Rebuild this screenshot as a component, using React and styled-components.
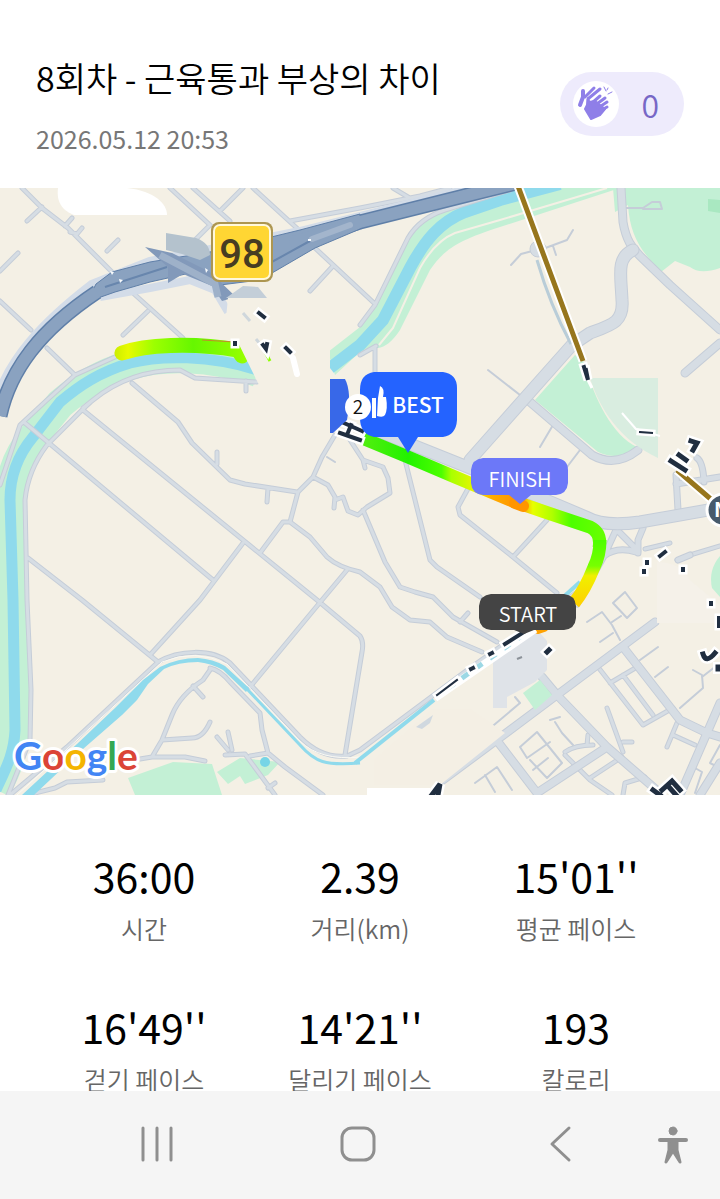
import styled, { createGlobalStyle } from "styled-components";

const GlobalStyle = createGlobalStyle`
  * {
    box-sizing: border-box;
  }

  body {
    margin: 0;
    background-color: #fff;
    font-family: "Noto Sans CJK KR", "Noto Sans", sans-serif;
    font-weight: 350;
  }
`;

const Screen = styled.div`
  display: flex;
  flex-direction: column;
  height: 100vh;
`;

const Content = styled.main`
  flex: 1;
  min-height: 0;
  overflow-y: auto;
  scrollbar-width: none;
`;

const Header = styled.header`
  display: flex;
  justify-content: space-between;
  align-items: center;
  padding: 52px 36px 32px;
`;

const Title = styled.h1`
  margin: 0 0 16px;
  font-size: 34px;
  font-weight: 350;
  line-height: 52px;
  color: #000;
`;

const DateText = styled.time`
  display: block;
  font-size: 25px;
  font-weight: 400;
  line-height: 36px;
  color: #777;
`;

const ClapButton = styled.button`
  display: flex;
  align-items: center;
  gap: 22px;
  height: 64px;
  padding: 0 25px 0 13px;
  border: none;
  border-radius: 32px;
  background-color: #eeebfc;
  color: #7767c6;
  font-family: inherit;
  font-size: 32px;
  font-weight: 350;
`;

const ClapCircle = styled.span`
  display: flex;
  width: 46px;
  height: 46px;
  border-radius: 50%;
  background-color: #fff;
`;

const MapSvg = styled.svg`
  display: block;
  width: 100%;
  height: auto;
  background-color: #f4f0e5;

  text {
    font-family: "Noto Sans CJK KR", "Noto Sans", sans-serif;
  }

  .shield {
    font-family: Roboto, sans-serif;
  }

  .logo {
    font-family: Lato, sans-serif;
  }
`;

const Stats = styled.dl`
  display: grid;
  grid-template-columns: repeat(3, 1fr);
  row-gap: 45px;
  margin: 0;
  padding: 49px 36px;
`;

const Stat = styled.div`
  display: flex;
  flex-direction: column-reverse;
  align-items: center;
`;

const StatLabel = styled.dt`
  font-size: 25px;
  line-height: 44px;
  color: #666;
`;

const StatValue = styled.dd`
  margin: 0;
  font-size: 41px;
  font-weight: 400;
  line-height: 62px;
  color: #000;
`;

const NavBar = styled.nav`
  display: grid;
  grid-template-columns: 1fr auto 1fr;
  align-items: start;
  flex: none;
  height: 108px;
  padding: 29px 4px 0 0;
  background-color: #f5f5f5;
`;

const NavSide = styled.div`
  display: flex;
  justify-content: ${(props) => (props.$end ? "flex-end" : "center")};
  gap: 65px;
  padding-right: ${(props) => (props.$end ? "19px" : "24px")};
`;

const NavButton = styled.button`
  display: flex;
  padding: 0;
  border: none;
  background: none;
`;

const stats = [
  { label: "시간", value: "36:00" },
  { label: "거리(km)", value: "2.39" },
  { label: "평균 페이스", value: "15'01''" },
  { label: "걷기 페이스", value: "16'49''" },
  { label: "달리기 페이스", value: "14'21''" },
  { label: "칼로리", value: "193" },
];

const ROAD = "#d6dde4";
const ROAD_EDGE = "#c5cdd8";
const GREEN = "#c3f0d5";
const WATER = "#8fdaec";
const INK = "#202e40";

const roads = [
  {
    width: 0,
    d: `M488 370L520 395 M553 425L540 447 M580 450L567 467 M327 457L335 462
      M511 265L521 254L536 250 M540 250L567 240L573 230 M553 246L556 255
      M626 208H643L652 202H660L662 209H643
      M613 603L625 592L637 608L627 618Z M587 622L602 612L612 625L620 640 M600 642L613 633 M612 622L621 616
      M480 718L488 730L520 703L515 697 M438 752L457 732L463 742L442 760
      M520 747L537 732L562 763L547 778L530 760M520 747L527 758L550 742
      M475 783L497 767L512 790M485 775L495 792 M550 720L560 717 M555 722L562 733L573 745
      M640 660L658 647 M655 677L668 667 M680 708L703 688L702 675L693 670 M702 677L720 663
      M533 770L548 758 M695 768L702 772L695 793 M720 745L710 763L720 768`,
  },
  {
    width: 3,
    d: `M22 188L42 208L68 228L112 272 M27 221L42 207 M65 226L72 218 M70 232L77 234L82 228
      M107 251L118 240 M0 271L18 253 M0 301L31 330 M170 188L210 225L195 240
      M193 188L230 221 M220 211L243 188 M253 188L300 231 M290 221L360 208L420 196L450 188
      M393 188L408 197 M315 248L374 303 M333 266L310 291 M133 293L183 338 M148 311L123 335
      M47 348L75 375 M132 383L152 400L178 422L192 443L230 480L245 484L297 492
      M246 381V391 M217 452V464 M268 488L267 502
      M83 410L317 600L360 636Q364 642 362 652L345 755 M25 423L213 580
      M28 558L82 600L158 662 M150 655L200 600L243 543 M347 570L322 600L250 687
      M260 553L283 522L290 522L310 537L327 557Q338 567 360 572L380 587L392 607L410 620L430 622L447 637L482 652
      M363 510L385 562L400 587L415 592L433 597L453 617L497 642 M460 622L468 613
      M290 522L298 492L313 477L322 457L335 435
      M313 477L328 485L335 497L334 508 M335 500L343 497L348 511L358 515L367 507L390 493L388 478L383 467L363 460L350 440
      M363 460L365 468 M405 460L430 560L437 567L480 597
      M470 485L458 507L460 515L513 557L557 593 M547 520L513 557
      M210 670L203 680Q180 695 172 715L162 740L152 757L140 759 M152 757L185 757L205 761
      M193 686L203 697 M162 740L192 738Q203 738 210 722
      M210 668Q220 670 230 682L260 713L262 730L268 753L285 767L323 795
      M225 755L245 754L275 795 M250 756L268 753 M217 737L228 750 M228 732L232 750 M275 783L268 788
      M35 793L55 788L67 782L103 780 M375 348V374 M360 355L376 346
      M598 667L643 725L673 708 M623 675L653 715 M610 683L637 667
      M607 708L623 752 M623 742L632 742 M677 723L667 747 M673 735L695 745
      M565 752Q575 745 593 745 M565 755L590 780L612 795 M590 778L622 757 M623 795L625 783L645 777 M588 735L587 745
      M645 549L670 543 M677 560L690 555L720 546
      M0 485L20 425L47 400L75 375L115 357
      M93 400L82 410L47 445Q28 470 25 500L27 600L31 690L30 740L8 795
      M83 408L93 400C120 378 150 370 180 370L195 378L257 382
      M360 325L375 305L408 238Q420 218 445 210L510 190
      M10 795L67 747L158 662C178 650 212 648 230 663L300 737Q322 759 347 756L360 750L470 668L545 615L580 590`,
  },
  {
    width: 5,
    d: `M676 475L678 510 M676 484L720 477 M697 458Q703 462 704 482
      M616 530L604 556L577 604 M617 530L638 551 M643 528L638 540V553 M604 556Q617 546 636 552
      M678 560L690 555`,
  },
  {
    width: 7,
    d: `M621 188L623 222C626 240 632 248 640 256L670 285L720 330 M685 373L720 343
      M655 622L557 695L443 780 M542 677L557 695L607 747L660 793
      M623 647L680 720L707 733L720 737 M720 703L680 795 M498 742L537 793L607 747 M720 763L700 795
      M530 402L592 455Q615 468 638 450`,
  },
  {
    width: 11,
    d: `M633 250C616 258 621 275 622 300C624 322 612 325 590 333L572 345L470 460
      M370 428L470 468L586 517C600 525 620 525 640 522L720 508`,
  },
];

// fragments of half-hidden place labels
const labelMarks = [
  { width: 5, d: "M259 313L264 317 M263 345L266 349L267 344 M286 348L290 352 M235 343V344 M584 367L588 380L586 370" },
  { width: 5, d: "M344 423L362 431 M340 433L360 440 M351 425L347 435" },
  { width: 3, d: "M640 432L652 433" },
  { width: 6, d: "M671 461L685 470 M679 455L686 460 M691 441L697 443L693 450" },
  { width: 5, d: "M660 556L665 552 M647 562V563 M644 571V572 M683 569V570 M711 603V604 M719 618V626" },
  { width: 6, d: "M703 654Q706 664 715 653 M718 667V669 M547 652L549 650" },
  { width: 3, d: "M437 695L457 680" },
  { width: 5, d: "M471 669L473 668 M490 654L492 653 M505 644L524 632" },
  { width: 6, d: "M431 796L440 784L438 795 M653 790L660 795 M662 790L672 781L680 790 M668 786L676 795" },
];

function MapRoads() {
  return roads.map((road) => (
    <g key={road.width} fill="none" strokeLinecap="round" strokeLinejoin="round">
      <path d={road.d} stroke={ROAD_EDGE} strokeWidth={road.width + 2} />
      {road.width > 0 && <path d={road.d} stroke={ROAD} strokeWidth={road.width} />}
    </g>
  ));
}

function RunMap() {
  return (
    <MapSvg viewBox="0 188 720 607" role="img" aria-label="러닝 경로 지도">
      <defs>
        <linearGradient id="routeWest" gradientUnits="userSpaceOnUse" x1="115" y1="0" x2="245" y2="0">
          <stop offset="0" stopColor="#ccee00" />
          <stop offset="0.1" stopColor="#e8fa00" />
          <stop offset="0.3" stopColor="#9cff00" />
          <stop offset="0.6" stopColor="#66f700" />
          <stop offset="1" stopColor="#96ff00" />
        </linearGradient>
        <linearGradient id="routeEast" gradientUnits="userSpaceOnUse" x1="360" y1="0" x2="600" y2="0">
          <stop offset="0" stopColor="#55ee10" />
          <stop offset="0.2" stopColor="#22f200" />
          <stop offset="0.34" stopColor="#4dff00" />
          <stop offset="0.38" stopColor="#aaff00" />
          <stop offset="0.48" stopColor="#e8f500" />
          <stop offset="0.55" stopColor="#ffac00" />
          <stop offset="0.67" stopColor="#ff9100" />
          <stop offset="0.72" stopColor="#e8ff00" />
          <stop offset="0.8" stopColor="#b0ff00" />
          <stop offset="0.88" stopColor="#4dff00" />
          <stop offset="1" stopColor="#66ff00" />
        </linearGradient>
        <linearGradient id="routeSouth" gradientUnits="userSpaceOnUse" x1="0" y1="540" x2="0" y2="605">
          <stop offset="0" stopColor="#4dff00" />
          <stop offset="0.4" stopColor="#77ff00" />
          <stop offset="0.55" stopColor="#f0f000" />
          <stop offset="1" stopColor="#ffd000" />
        </linearGradient>
      </defs>

      <g fill={GREEN}>
        <path d="M328 352L360 327L375 305L408 238Q420 218 445 210L510 188H620L500 227C460 240 445 248 430 270L400 330C392 342 385 347 378 348L360 352L335 375Z" />
        <path d="M613 188H720V268Q700 275 690 267L675 261L661 272C640 250 630 235 628 205L615 212Z" />
        <path d="M535 400L575 355L584 362C595 400 612 435 637 447Q620 462 598 452Z" />
        <path d="M128 778L173 762L212 764L222 795H135Z M217 772L240 758L280 762L268 775L245 784L240 776L228 784Z" />
        <path d="M720 556Q708 570 712 588L720 597Z" />
      </g>
      <path d="M708 199L720 200V213L708 211Z" fill="#a9e8c1" />
      <path d="M258 372C210 355 160 355 130 365C100 374 80 387 60 404L33 437C18 455 10 475 10 500L13 600L15 730C14 755 5 770 -4 790" fill="none" stroke={GREEN} strokeWidth="30" />
      <path d="M258 370C210 355 160 355 130 363C100 372 80 385 60 402L33 437C18 455 10 475 10 500L13 600L15 730C14 755 5 770 -4 790" fill="none" stroke={WATER} strokeWidth="11" />
      <path d="M330 368L360 345L383 320L410 268C425 240 440 222 465 212L500 200L560 184" fill="none" stroke={WATER} strokeWidth="12" />
      <path d="M379 345L393 328L420 268C433 245 445 237 455 233L500 220L607 188" fill="none" stroke="#f4f0e5" strokeWidth="2" />

      <MapRoads />
      <path d="M17 795L162 662Q195 648 227 664L300 741Q320 761 360 757" fill="none" stroke="#faf9f3" />
      <path d="M22 795L77 744L115 708L143 680L160 667Q178 658 198 658Q213 659 225 666L249 688L246 692L223 670Q210 663 198 662Q178 662 164 669L148 684L137 700L122 715L83 749L34 795Z" fill={WATER} />
      <g fill="none" stroke={WATER}>
        <path d="M247 689L300 745C315 762 325 766 360 763" strokeWidth="3" />
        <path d="M355 763L434 700" strokeWidth="4" />
        <path d="M560 600L580 582" strokeWidth="4" />
      </g>
      <circle cx="265" cy="762" r="5" fill="#76d5e6" />

      {/* expressway */}
      <g fill="none" strokeLinejoin="round">
        <path d="M-3 400C10 360 40 325 92 285L150 262L300 232L515 178" stroke="#d3dce8" strokeWidth="10" />
        <path d="M100 297L150 288L190 280L215 290L228 312" stroke="#d3dce8" strokeWidth="8" />
        <path d="M0 416C10 370 40 330 97 292" stroke="#5f7fa8" strokeWidth="15" />
        <path d="M290 243L360 222L460 197L520 182" stroke="#5f7fa8" strokeWidth="15" />
      </g>
      <path d="M86 304L96 284L112 272L150 262L210 252L300 230L360 214V229L315 248L260 280L220 285L190 273L150 282L115 292L98 298Z" fill="#8aa2c0" stroke="#5f7fa8" />
      <g fill="none" stroke="#8aa2c0">
        <path d="M0 416C10 370 40 330 97 292" strokeWidth="12" />
        <path d="M290 243L360 222L460 197L520 182" strokeWidth="12" />
      </g>
      <path d="M105 287L167 267 M270 263L308 242L350 225" fill="none" stroke="#6886ad" strokeWidth="2" />
      <path d="M312 239L350 225" stroke="#a3b5cc" strokeWidth="6" strokeLinecap="round" />
      <path d="M145 247L172 253L210 272L236 297L222 301L212 286L183 274L168 283V267Z" fill="#8299ba" />
      <path d="M160 255L215 284L218 297" fill="none" stroke="#9eb1c9" strokeWidth="7" />
      <path d="M166 233L196 238Q210 243 210 255L200 260L182 254L166 250Z" fill="#b4c2cd" />
      <path d="M226 298L243 286L258 287L267 298Z" fill="#c3ced8" />
      <path d="M110 271L114 272L112 275Z M119 279L123 280L120 283Z M205 268L208 270L206 273Z M308 239H311V241H308Z" fill="#f7fafc" />

      <path d="M58 188C56 204 64 211 74 215H167C167 204 155 191 127 188Z" fill="#fff" />

      {/* railway */}
      <g fill="none">
        <path d="M537 260Q550 305 571 344" stroke="#b9cdd8" strokeWidth="3" />
        <circle cx="538" cy="249" r="8" fill={ROAD} stroke={ROAD_EDGE} />
        <path d="M518 186L583 361 M677 470L713 501" stroke="#fff" strokeWidth="9" />
        <path d="M518 186L583 361 M677 470L713 501" stroke="#97761d" strokeWidth="5" />
      </g>
      <path d="M590 378H658V458C620 440 600 410 590 378Z" fill="#d9ede0" />
      <path d="M584 372L592 388" fill="none" stroke="#fff" strokeWidth="3" />
      <path d="M622 413L636 429L660 436" fill="none" stroke="#fff" strokeWidth="2" />

      <path d="M493 657L523 633H540L547 641V670L535 682L507 697V708H493Z" fill="#dfe3e8" />
      <path d="M523 693L540 680L552 695L535 710Z" fill={GREEN} />
      <path d="M657 562Q680 562 690 580L720 605V623H657Z" fill="#f5f1e9" />
      <path d="M374 760L433 709H470L505 733L440 785H374Z" fill="#f4efe4" />
      <path d="M416 727L433 715L430 723L422 729Z" fill="#d0d8df" />
      <path d="M367 788H430L437 795H367Z" fill="#fff" />

      {/* route */}
      <path d="M122 353C145 345 190 342 238 350L242 356" fill="none" stroke="url(#routeWest)" strokeWidth="15" strokeLinecap="round" />
      <path d="M202 340L235 342" stroke="#c28b2b" strokeWidth="1" />
      <path d="M362 438L408 457L455 477L510 500L545 512L590 527Q602 533 599 548" fill="none" stroke="url(#routeEast)" strokeWidth="13" />
      <path d="M600 540Q600 555 594 567Q585 590 574 603" fill="none" stroke="url(#routeSouth)" strokeWidth="13" />
      <path d="M515 503L523 506" stroke="#ff9500" strokeWidth="12" strokeLinecap="round" />
      <path d="M538 630L544 628" stroke="#ffa200" strokeWidth="8" strokeLinecap="round" />

      {/* faded corner between the two river arms */}
      <path d="M228 298L226 318L258 383L270 405H330V350L318 350L290 298Z" fill="#f4f0e5" />
      <path d="M243 313L250 321 M256 339L265 350" stroke="#cfd7dc" strokeWidth="3" />
      <path d="M265 352L270 361" stroke="#8dff00" strokeWidth="3" />

      <path d="M435 698L535 629" stroke="#fff" strokeWidth="8" />
      <path d="M448 688L520 637" stroke="#9cd8e5" strokeWidth="5" strokeDasharray="8 9" />
      <path d="M293 358L297 374" stroke="#fff" strokeWidth="6" strokeLinecap="round" />
      {labelMarks.map((mark) => (
        <g key={mark.d} fill="none" strokeLinecap="square">
          <path d={mark.d} stroke="#fff" strokeWidth={mark.width + 4} />
          <path d={mark.d} stroke={INK} strokeWidth={mark.width - 1} />
        </g>
      ))}
      <path d="M517 659L522 657" stroke="#8c9299" strokeWidth="2" />

      <circle cx="723" cy="510" r="16" fill="#475a6c" stroke="#fff" strokeWidth="3" />
      <text x="714" y="517" fontSize="20" fontWeight="700" fill="#fff">N</text>

      {/* road shield */}
      <rect x="211" y="222" width="62" height="60" rx="8" fill="#ad9650" />
      <rect x="213" y="224" width="58" height="56" rx="7" fill="#fff8dc" />
      <rect x="215" y="226" width="54" height="52" rx="5" fill="#ffd633" />
      <text className="shield" x="242" y="268" fontSize="40" fontWeight="500" textAnchor="middle" fill="#473d22">98</text>

      {/* best pace pin */}
      <path d="M330 379H345Q352 392 347 420L333 433H330Z" fill="#3868e8" />
      <path d="M374 372H443Q457 374 457 388V420Q456 435 443 437H418L408 453L398 437H374Q360 434 360 418V390Q360 374 374 372Z" fill="#2463ff" />
      <path d="M372 398H376V418H372Z M378 398L380 386Q385 388 383 397H386Q388 409 385 415Q383 418 377 416Z" fill="#fff" />
      <text x="418" y="413" fontSize="21" fontWeight="500" textAnchor="middle" fill="#fff">BEST</text>
      <circle cx="358" cy="407" r="13" fill="#fff" />
      <text x="358" y="414" fontSize="19" textAnchor="middle" fill="#111">2</text>

      <path d="M483 458H556Q568 459 568 470V483Q567 494 556 495H531L520 504L509 495H483Q472 494 471 483V470Q472 459 483 458Z" fill="#6c78f8" />
      <text x="520" y="487" fontSize="20" textAnchor="middle" fill="#fff">FINISH</text>

      <path d="M491 594H564Q575 595 576 606V618Q575 629 564 630H534L524 634L514 630H491Q480 629 479 618V606Q480 595 491 594Z" fill="#444" />
      <text x="528" y="622" fontSize="20" textAnchor="middle" fill="#fff">START</text>

      <text className="logo" x="14" y="770" fontSize="39" fontWeight="700" stroke="#fff" strokeWidth="6" strokeLinejoin="round" paintOrder="stroke">
        <tspan fill="#4285f4">G</tspan>
        <tspan fill="#db4437">o</tspan>
        <tspan fill="#f4b400">o</tspan>
        <tspan fill="#4285f4">g</tspan>
        <tspan fill="#34a853">l</tspan>
        <tspan fill="#db4437">e</tspan>
      </text>
    </MapSvg>
  );
}

function ClapIcon() {
  return (
    <svg width="46" height="46" viewBox="0 0 46 46" fill="none" stroke="#8f7fe8" strokeLinecap="round" strokeLinejoin="round" aria-hidden="true">
      <path d="M10 10V16L7 24" strokeWidth="4" />
      <path d="M12 16L21 7 M16 17L27 8" strokeWidth="3" />
      <path d="M31 6L33 10 M35 7L34 9 M39 11L35 13" strokeWidth="1" />
      <path d="M15 17L14 24L12 28L18 38L27 34L32 28L22 20L16 21Z" fill="#8f7fe8" strokeWidth="2" />
      <path d="M15 18V26 M19 22L27 15 M21 25L32 17 M25 27L34 21 M27 30L34 26" strokeWidth="3" />
    </svg>
  );
}

export default function RunRecord() {
  return (
    <Screen>
      <GlobalStyle />
      <Content>
        <Header>
          <div>
            <Title>8회차 - 근육통과 부상의 차이</Title>
            <DateText dateTime="2026-05-12T20:53">2026.05.12 20:53</DateText>
          </div>
          <ClapButton type="button" aria-label="박수 0">
            <ClapCircle>
              <ClapIcon />
            </ClapCircle>
            0
          </ClapButton>
        </Header>
        <RunMap />
        <Stats>
          {stats.map((stat) => (
            <Stat key={stat.label}>
              <StatLabel>{stat.label}</StatLabel>
              <StatValue>{stat.value}</StatValue>
            </Stat>
          ))}
        </Stats>
      </Content>
      <NavBar>
        <NavSide>
          <NavButton type="button" aria-label="최근 앱">
            <svg width="36" height="48" viewBox="0 0 36 48" fill="none" stroke="#8f8f8f" strokeWidth="3" strokeLinecap="round">
              <path d="M4 8V40 M18 8V40 M32 8V40" />
            </svg>
          </NavButton>
        </NavSide>
        <NavButton type="button" aria-label="홈">
          <svg width="40" height="48" viewBox="0 0 40 48" fill="none" stroke="#8f8f8f" strokeWidth="3">
            <rect x="4" y="8" width="32" height="32" rx="10" />
          </svg>
        </NavButton>
        <NavSide $end>
          <NavButton type="button" aria-label="뒤로">
            <svg width="48" height="48" viewBox="0 0 48 48" fill="none" stroke="#8f8f8f" strokeWidth="3" strokeLinecap="round" strokeLinejoin="round">
              <path d="M33 8L16 24L33 40" />
            </svg>
          </NavButton>
          <NavButton type="button" aria-label="접근성">
            <svg width="48" height="48" viewBox="0 0 48 48" fill="#8f8f8f" stroke="#8f8f8f" strokeLinecap="round" strokeLinejoin="round">
              <circle cx="24" cy="11" r="4" />
              <path d="M11 20H37" strokeWidth="4" />
              <path d="M20 21H28V30L31 42L24 31L17 42L20 30Z" strokeWidth="3" />
            </svg>
          </NavButton>
        </NavSide>
      </NavBar>
    </Screen>
  );
}
